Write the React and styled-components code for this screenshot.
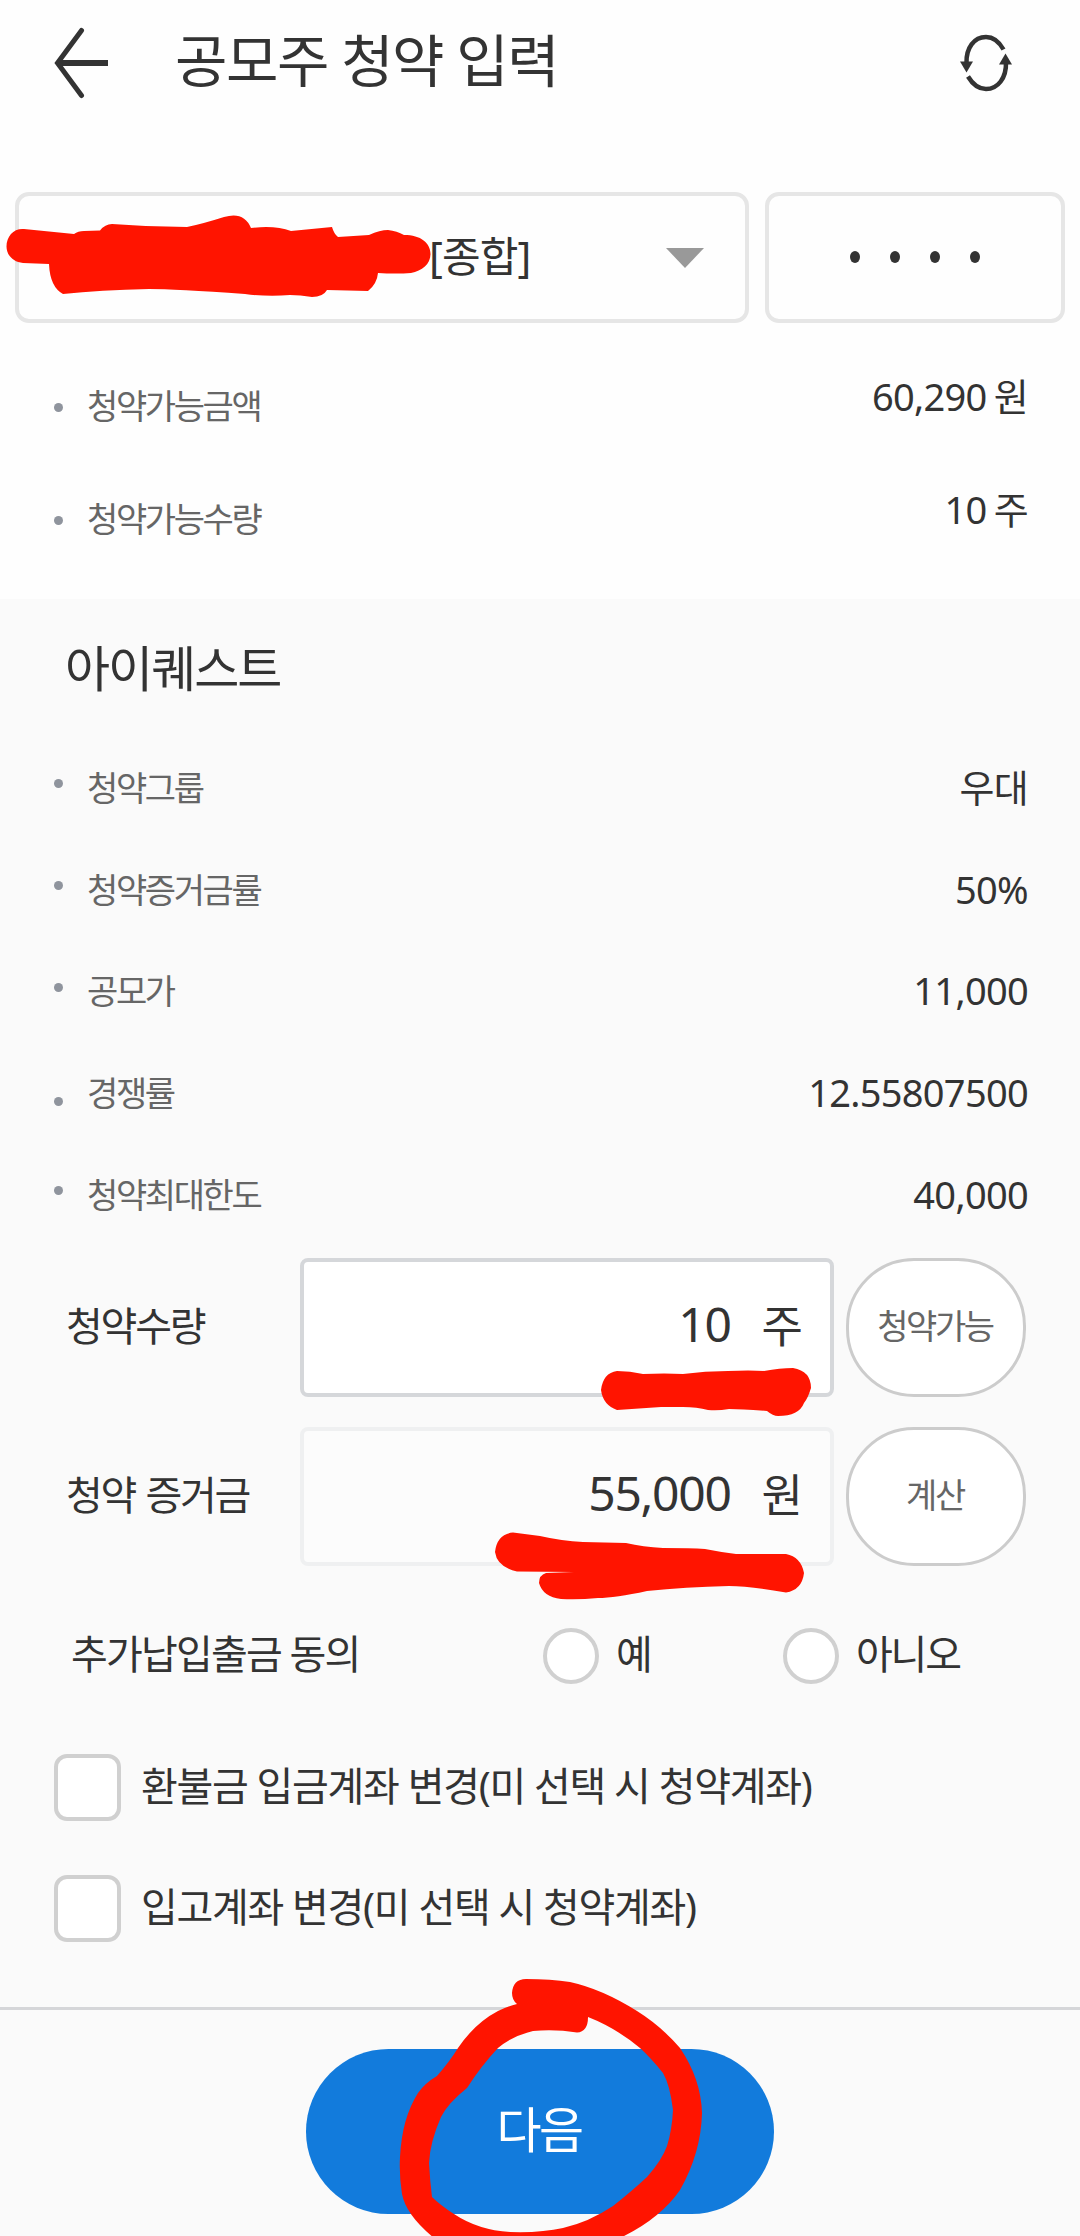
import { useState } from "react";
import styled, { createGlobalStyle } from "styled-components";

const accountInfo = [
  { label: "청약가능금액", value: "60,290 원" },
  { label: "청약가능수량", value: "10 주" },
];

const stockInfo = [
  { label: "청약그룹", value: "우대", dot: -4 },
  { label: "청약증거금률", value: "50%", dot: -4 },
  { label: "공모가", value: "11,000", dot: -4 },
  { label: "경쟁률", value: "12.55807500", dot: 8 },
  { label: "청약최대한도", value: "40,000", dot: -4 },
];

const App = () => {
  const [agree, setAgree] = useState("");
  const [refund, setRefund] = useState(false);
  const [deposit, setDeposit] = useState(false);

  return (
    <Page>
      <GlobalStyle />
      <Header>
        <BackIcon />
        <Title>공모주 청약 입력</Title>
        <RefreshIcon />
      </Header>

      <AccountRow>
        <AccountSelect>
          <AccountName>[종합]</AccountName>
          <Arrow viewBox="0 0 38 20">
            <path d="M0 0H38L19 20Z" fill="#999" />
          </Arrow>
        </AccountSelect>
        <PasswordBox>
          <PasswordDot />
          <PasswordDot />
          <PasswordDot />
          <PasswordDot />
        </PasswordBox>
      </AccountRow>

      <AccountInfo>
        {accountInfo.map((item) => (
          <InfoRow key={item.label} $height={113}>
            <Dot $offset={2} />
            <InfoLabel>{item.label}</InfoLabel>
            <InfoValue $raise={20}>{item.value}</InfoValue>
          </InfoRow>
        ))}
      </AccountInfo>

      <Section>
        <StockName>아이퀘스트</StockName>
        {stockInfo.map((item) => (
          <InfoRow key={item.label} $height={101.75}>
            <Dot $offset={item.dot} />
            <InfoLabel>{item.label}</InfoLabel>
            <InfoValue $raise={2}>{item.value}</InfoValue>
          </InfoRow>
        ))}

        <Form>
          <FormRow>
            <FormLabel>청약수량</FormLabel>
            <InputBox>
              <Amount>10</Amount>
              <Unit>주</Unit>
            </InputBox>
            <RoundButton>청약가능</RoundButton>
          </FormRow>
          <FormRow>
            <FormLabel>청약 증거금</FormLabel>
            <InputBox $readOnly>
              <Amount>55,000</Amount>
              <Unit>원</Unit>
            </InputBox>
            <RoundButton>계산</RoundButton>
          </FormRow>
        </Form>

        <AgreeRow>
          <AgreeLabel>추가납입출금 동의</AgreeLabel>
          <RadioItem onClick={() => setAgree("Y")}>
            <Radio $checked={agree === "Y"} />
            <RadioText>예</RadioText>
          </RadioItem>
          <RadioItem onClick={() => setAgree("N")}>
            <Radio $checked={agree === "N"} />
            <RadioText>아니오</RadioText>
          </RadioItem>
        </AgreeRow>

        <CheckRow onClick={() => setRefund(!refund)}>
          <CheckBox $checked={refund} />
          <CheckText>환불금 입금계좌 변경(미 선택 시 청약계좌)</CheckText>
        </CheckRow>
        <CheckRow onClick={() => setDeposit(!deposit)}>
          <CheckBox $checked={deposit} />
          <CheckText>입고계좌 변경(미 선택 시 청약계좌)</CheckText>
        </CheckRow>
      </Section>

      <Footer>
        <NextButton>다음</NextButton>
      </Footer>

      <PenMarks />
    </Page>
  );
};

const BackIcon = () => (
  <svg width="56" height="72" viewBox="0 0 56 72" fill="none" stroke="#333">
    <path d="M28.500 3.500L4.500 36L28.500 68.500" strokeWidth="5" strokeLinecap="round" />
    <path d="M4 36H55" strokeWidth="6" />
  </svg>
);

const RefreshIcon = () => (
  <svg width="52" height="58" viewBox="0 0 52 58" fill="none" stroke="#333" strokeWidth="4.500">
    <path d="M6.500 29C6 14 14 3 26 3C33 3 39 7.500 43.500 15.500" />
    <path d="M46 28C46.500 44 38 55 26 55C18.500 55 12.500 50 8 42.500" />
    <path d="M0 27.500H13L6.500 38.500Z" fill="#333" stroke="none" />
    <path d="M39 30.500H52L45.500 19.500Z" fill="#333" stroke="none" />
  </svg>
);

// 빨간 펜 표시 (계좌번호 가림, 밑줄, 동그라미)
const PenMarks = () => (
  <PenLayer viewBox="0 0 1080 2236" fill="#ff1400">
    <path
      d="M6.500 246.500C6.500 236 14 228 24 229L74 234Q78 231 84 231L100 230.500Q105 224 112 224
      Q150 227 187 227Q202 224 224 217Q244 211 251 228Q275 225 291 231L332 227Q334 234 338 237
      L369 235Q380 230 388 230Q397 231 404 235C421 235 430.500 243 430.500 254
      C430.500 264 422 271 411 273Q396 274 378 273Q377 284 368 291L327 290Q323 297 312 297
      Q300 295 290 295Q268 297 245 294Q175 289 149 289Q100 290 63 294Q50 287 49 264L23 263
      C13 262 6.500 255 6.500 246.500Z"
    />
    <path
      d="M601 1390Q603 1373 617 1371Q630 1371 643 1374Q665 1373 683 1374Q705 1371 728 1371
      Q750 1370 764 1371Q780 1368 793 1368Q811 1371 811 1388Q808 1398 804 1403Q799 1416 778 1416
      Q773 1416 767 1411Q742 1409 729 1409Q718 1411 708 1410Q697 1407 683 1407L661 1407
      L617 1410Q603 1405 601 1390Z"
    />
    <path
      d="M495 1552Q497 1534 513 1532.500L540 1536Q562 1541 583 1542L626 1543Q643 1547 663 1548
      Q691 1548 705 1549Q720 1552 736 1554L786 1554Q801 1557 804 1573Q802 1590 786 1592.500
      Q750 1586 729 1586Q685 1587 647 1591Q615 1598 598 1598Q578 1600 561 1599Q543 1597 539 1583
      Q539 1575 546 1573L574 1572L517 1571.500Q497 1567 495 1552Z"
    />
    <path
      fillRule="evenodd"
      d="M512 1993Q513 1979 526 1979Q551 1979 570 1982Q602 1989 637 2011Q661 2026 680 2048
      Q701 2079 702 2113Q701 2153 680 2190Q660 2219 620 2238H434Q406 2215 402 2194
      Q399 2175 400 2157Q402 2118 418 2093Q425 2083 437 2076Q450 2061 458 2048
      Q475 2023 498 2011Q508 2006 517 2004Q512 2000 512 1993Z
      M588 2017Q588 2032 577 2032.500Q555 2029 533 2031Q512 2036 498 2048Q481 2066 467 2088
      Q448 2103 441 2117Q430 2142 429 2163Q430 2181 432 2197Q440 2205 454 2214
      Q478 2230 510 2232Q541 2233 563 2228Q589 2222 613 2206Q632 2191 647 2177Q662 2160 667 2146
      Q672 2130 673 2110Q670 2085 663 2073Q651 2058 640 2048Q616 2028 588 2017Z"
    />
  </PenLayer>
);

const GlobalStyle = createGlobalStyle`
  * {
    box-sizing: border-box;
  }

  body {
    margin: 0;
    background-color: #fefefe;
  }

  button {
    font-family: inherit;
  }
`;

const Page = styled.div`
  position: relative;
  width: 1080px;
  height: 2236px;
  overflow: hidden;
  display: flex;
  flex-direction: column;
  color: #333;
  background-color: #fefefe;
  font-family: "Noto Sans", "Noto Sans CJK KR", sans-serif;
`;

const Header = styled.header`
  display: flex;
  align-items: center;
  height: 192px;
  padding: 0 68px 67px 53px;
`;

const Title = styled.h1`
  flex: 1;
  margin: 0 0 0 66px;
  padding-bottom: 5px;
  font-size: 57px;
  font-weight: 400;
  line-height: 80px;
  letter-spacing: -1.5px;
`;

const AccountRow = styled.div`
  display: flex;
  gap: 16px;
  height: 131px;
  padding: 0 15px;
`;

const AccountSelect = styled.div`
  display: flex;
  align-items: center;
  justify-content: space-between;
  width: 734px;
  padding: 0 41px 0 410px;
  border: 4px solid #e6e6e6;
  border-radius: 14px;
`;

const AccountName = styled.span`
  padding-bottom: 9px;
  font-size: 42px;
  letter-spacing: -0.9px;
`;

const Arrow = styled.svg`
  width: 38px;
  height: 20px;
`;

const PasswordBox = styled.div`
  display: flex;
  align-items: center;
  justify-content: center;
  gap: 30px;
  width: 300px;
  padding-bottom: 2px;
  border: 4px solid #e6e6e6;
  border-radius: 14px;
`;

const PasswordDot = styled.span`
  width: 10px;
  height: 12px;
  border-radius: 50%;
  background-color: #333;
`;

const AccountInfo = styled.div`
  height: 276px;
  padding-top: 26px;
`;

const InfoRow = styled.div`
  display: flex;
  align-items: center;
  height: ${(props) => props.$height}px;
  padding: 0 52px 0 54px;
`;

const Dot = styled.span`
  width: 9px;
  height: 9px;
  margin-top: ${(props) => props.$offset * 2}px;
  border-radius: 50%;
  background-color: #8f949d;
`;

const InfoLabel = styled.span`
  flex: 1;
  margin-left: 24px;
  color: #666;
  font-size: 34px;
  line-height: 50px;
  letter-spacing: -2.4px;
`;

const InfoValue = styled.span`
  padding-bottom: ${(props) => props.$raise}px;
  font-size: 38px;
  line-height: 50px;
  letter-spacing: -0.7px;
  word-spacing: -2px;
`;

const Section = styled.section`
  height: 1408px;
  background-color: #fafafa;
`;

const StockName = styled.h2`
  margin: 0;
  padding-left: 65px;
  font-size: 49px;
  font-weight: 400;
  line-height: 138px;
  letter-spacing: -2px;
`;

const Form = styled.div`
  display: flex;
  flex-direction: column;
  gap: 30px;
  padding: 12px 54px 0 66px;
`;

const FormRow = styled.div`
  display: flex;
  align-items: center;
  height: 139px;
`;

const FormLabel = styled.span`
  width: 234px;
  padding-bottom: 7px;
  font-size: 40px;
  letter-spacing: -2.2px;
  word-spacing: 2px;
`;

const InputBox = styled.div`
  display: flex;
  align-items: center;
  justify-content: flex-end;
  width: 534px;
  height: 139px;
  padding: 0 27px 7px 0;
  border: 4px solid ${(props) => (props.$readOnly ? "#eff0f1" : "#d5d7da")};
  border-radius: 8px;
  background-color: ${(props) => (props.$readOnly ? "#fcfcfc" : "#fff")};
`;

const Amount = styled.span`
  font-size: 48px;
  letter-spacing: -1.3px;
`;

const Unit = styled.span`
  margin-left: 31px;
  font-size: 45px;
`;

const RoundButton = styled.button`
  width: 180px;
  height: 139px;
  margin-left: 12px;
  padding: 0 2px 6px 0;
  border: 3px solid #ccc;
  border-radius: 68px;
  background-color: #fff;
  color: #666;
  font-size: 34px;
  letter-spacing: -2.4px;
`;

const AgreeRow = styled.div`
  display: grid;
  grid-template-columns: 472px 240px 1fr;
  align-items: center;
  height: 90px;
  margin-top: 45px;
  padding-left: 71px;
  font-size: 40px;
`;

const AgreeLabel = styled.span`
  padding-bottom: 7px;
  letter-spacing: -1.8px;
  white-space: nowrap;
`;

const RadioItem = styled.label`
  display: flex;
  align-items: center;
  gap: 17px;
`;

const Radio = styled.span`
  width: 56px;
  height: 56px;
  border: 4px solid #d0d0d0;
  border-radius: 50%;
  background-color: ${(props) => (props.$checked ? "#127bdc" : "#fff")};
`;

const RadioText = styled.span`
  padding-bottom: 7px;
  letter-spacing: -2.2px;
`;

const CheckRow = styled.label`
  display: flex;
  align-items: center;
  gap: 20px;
  height: 121px;
  padding-left: 54px;

  ${AgreeRow} + & {
    margin-top: 26px;
  }
`;

const CheckBox = styled.span`
  width: 67px;
  height: 67px;
  border: 4px solid #d0d0d0;
  border-radius: 13px;
  background-color: ${(props) => (props.$checked ? "#127bdc" : "#fff")};
`;

const CheckText = styled.span`
  padding-bottom: 7px;
  font-size: 40px;
  letter-spacing: -1.3px;
`;

const Footer = styled.footer`
  display: flex;
  justify-content: center;
  align-items: flex-start;
  height: 229px;
  padding-top: 39px;
  border-top: 3px solid #d5d6d9;
  background-color: #fafafa;
`;

const NextButton = styled.button`
  width: 468px;
  height: 165px;
  padding: 0 2px 11px 0;
  border: none;
  border-radius: 83px;
  background-color: #127bdc;
  color: #fff;
  font-size: 49px;
  letter-spacing: -2.6px;
`;

const PenLayer = styled.svg`
  position: absolute;
  top: 0;
  left: 0;
  width: 1080px;
  height: 2236px;
  pointer-events: none;
`;

export default App;
